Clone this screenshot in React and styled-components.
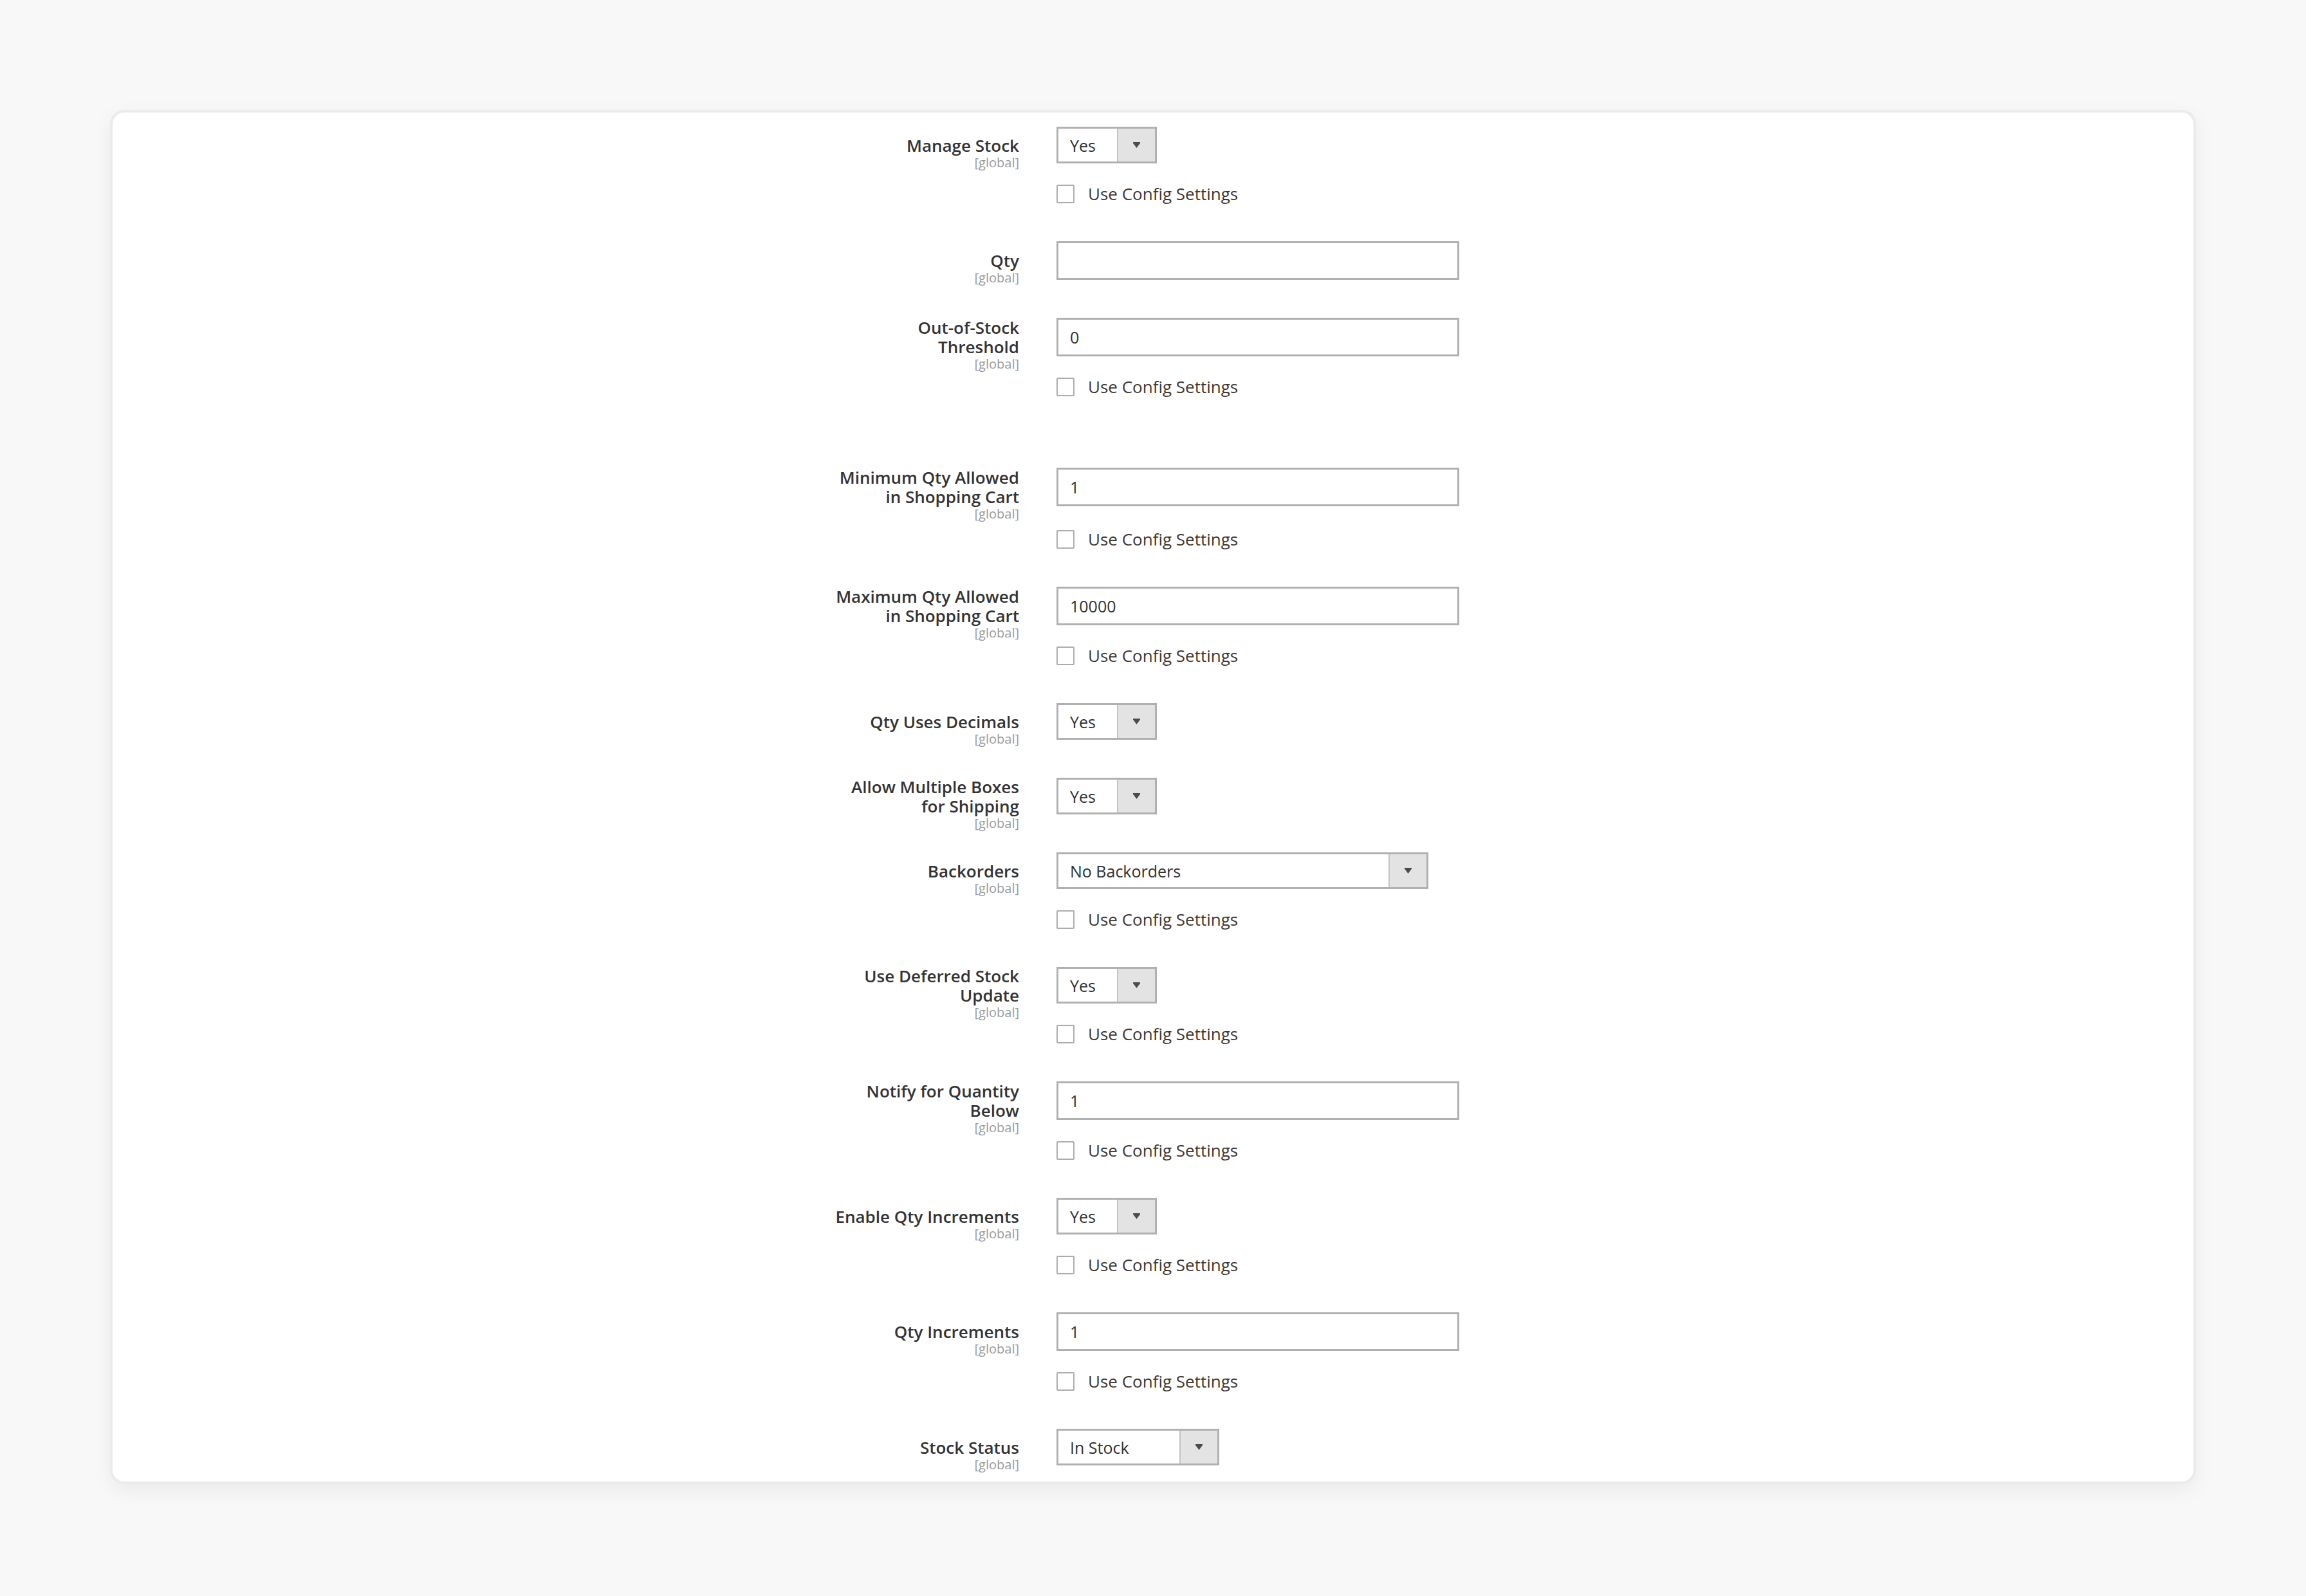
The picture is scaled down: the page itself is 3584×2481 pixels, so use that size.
import React from "react";
import styled, { createGlobalStyle } from "styled-components";

const GlobalStyle = createGlobalStyle`
  html, body {
    margin: 0;
    padding: 0;
    background: #f8f8f8;
  }
  body {
    font-family: "Open Sans", "Noto Sans", "Liberation Sans", sans-serif;
    color: #303030;
  }
  *, *::before, *::after {
    box-sizing: border-box;
  }
`;

const Page = styled.div`
  min-height: 2481px;
  padding: 171px 171px 0;
  background: #f8f8f8;
`;

const Card = styled.section`
  height: 2136px;
  overflow: hidden;
  background: #ffffff;
  border: 4px solid #ebebeb;
  border-radius: 22px;
  box-shadow: 0 10px 32px rgba(0, 0, 0, 0.06);
  padding-top: 22px;
`;

const Form = styled.div`
  display: flex;
  flex-direction: column;
  gap: 59px;
`;

const Row = styled.div`
  display: grid;
  grid-template-columns: 1409px 1fr;
  column-gap: 58px;
  margin-bottom: ${(p) => (p.$extra ? `${p.$extra}px` : "0")};
`;

const LabelCell = styled.div`
  grid-column: 1;
  grid-row: 1;
  align-self: center;
  margin: -3px 0;
  text-align: right;
`;

const LabelText = styled.div`
  font-size: 26px;
  font-weight: 600;
  line-height: 30px;
  color: #333333;
  white-space: nowrap;
`;

const Scope = styled.div`
  font-size: 20px;
  line-height: 24px;
  color: #9a9a9a;
  margin-bottom: -24px;
`;

const ControlCell = styled.div`
  grid-column: 2;
  grid-row: 1;
  display: flex;
  align-items: flex-start;
`;

const TextInput = styled.input`
  width: 626px;
  height: 60px;
  border: 3px solid #b0b0b0;
  border-radius: 0;
  padding: 0 18px;
  font-family: inherit;
  font-size: 25px;
  color: #303030;
  background: #fff;
  outline: none;
`;

const SelectBox = styled.div`
  display: flex;
  width: ${(p) => p.$width}px;
  height: 57px;
  border: 3px solid #b0b0b0;
  background: #fff;
`;

const SelectValue = styled.span`
  flex: 1;
  display: flex;
  align-items: center;
  padding-left: 18px;
  font-size: 25px;
  color: #303030;
  white-space: nowrap;
`;

const SelectArrow = styled.span`
  width: 59px;
  display: flex;
  align-items: center;
  justify-content: center;
  background: #e3e3e3;
  border-left: 2px solid #c4c4c4;
`;

const OptionLine = styled.label`
  grid-column: 2;
  grid-row: 2;
  margin-top: ${(p) => p.$gap || 33}px;
  display: flex;
  align-items: center;
  gap: 21px;
  height: 29px;
  font-size: 26px;
  line-height: 29px;
  color: #41362f;
`;

const CheckBox = styled.input`
  appearance: none;
  margin: 0;
  width: 28px;
  height: 29px;
  border: 2px solid #adadad;
  border-radius: 2px;
  background: #fff;
`;

const Arrow = () => (
  <svg width="11" height="9" viewBox="0 0 11 9">
    <path d="M0 0H11V1.6L5.5 9L0 1.6Z" fill="#514943" />
  </svg>
);

const fields = [
  { label: ["Manage Stock"], type: "select", value: "Yes", width: 156, config: true },
  { label: ["Qty"], type: "input", value: "" },
  { label: ["Out-of-Stock", "Threshold"], type: "input", value: "0", config: true, extra: 52 },
  { label: ["Minimum Qty Allowed", "in Shopping Cart"], type: "input", value: "1", config: true, optGap: 37 },
  { label: ["Maximum Qty Allowed", "in Shopping Cart"], type: "input", value: "10000", config: true },
  { label: ["Qty Uses Decimals"], type: "select", value: "Yes", width: 156 },
  { label: ["Allow Multiple Boxes", "for Shipping"], type: "select", value: "Yes", width: 156 },
  { label: ["Backorders"], type: "select", value: "No Backorders", width: 578, config: true },
  { label: ["Use Deferred Stock", "Update"], type: "select", value: "Yes", width: 156, config: true },
  { label: ["Notify for Quantity", "Below"], type: "input", value: "1", config: true },
  { label: ["Enable Qty Increments"], type: "select", value: "Yes", width: 156, config: true },
  { label: ["Qty Increments"], type: "input", value: "1", config: true },
  { label: ["Stock Status"], type: "select", value: "In Stock", width: 253 },
];

function Field({ field }) {
  return (
    <Row $extra={field.extra}>
      <LabelCell>
        <LabelText>
          {field.label.map((line, i) => (
            <React.Fragment key={i}>
              {i > 0 && <br />}
              {line}
            </React.Fragment>
          ))}
        </LabelText>
        <Scope>[global]</Scope>
      </LabelCell>
      <ControlCell>
        {field.type === "input" ? (
          <TextInput type="text" defaultValue={field.value} />
        ) : (
          <SelectBox $width={field.width}>
            <SelectValue>{field.value}</SelectValue>
            <SelectArrow>
              <Arrow />
            </SelectArrow>
          </SelectBox>
        )}
      </ControlCell>
      {field.config && (
        <OptionLine $gap={field.optGap}>
          <CheckBox type="checkbox" />
          Use Config Settings
        </OptionLine>
      )}
    </Row>
  );
}

export default function App() {
  return (
    <>
      <GlobalStyle />
      <Page>
        <Card>
          <Form>
            {fields.map((f, i) => (
              <Field key={i} field={f} />
            ))}
          </Form>
        </Card>
      </Page>
    </>
  );
}
